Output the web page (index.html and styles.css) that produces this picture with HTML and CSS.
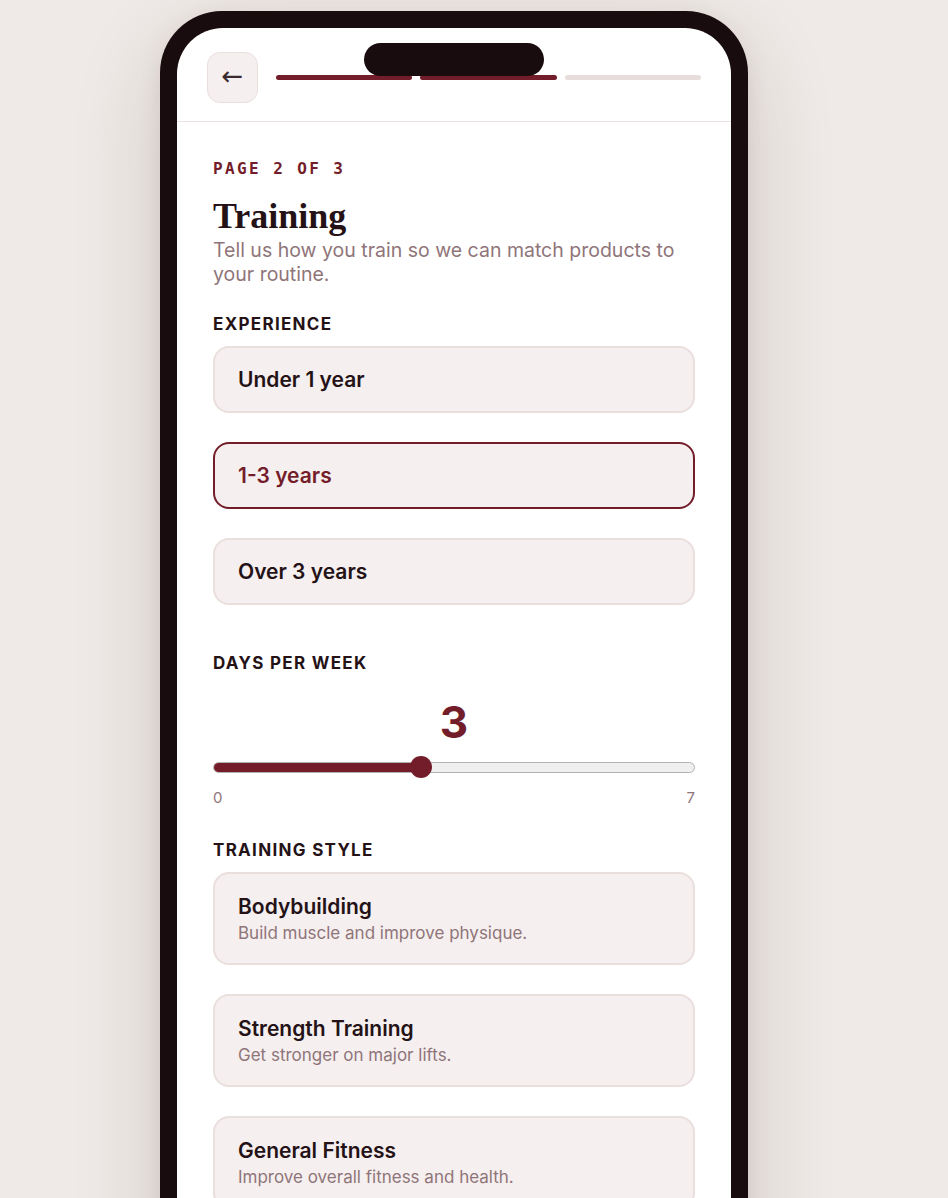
FILE: index.html
```html
<!DOCTYPE html>
<html lang="en">
<head>
<meta charset="utf-8">
<title>Training</title>
<link rel="stylesheet" href="styles.css">
</head>
<body>
<div class="stage">
  <div class="phone">
    <div class="screen">
      <div class="notch"></div>
      <header class="topbar">
        <button class="back" aria-label="Back">←</button>
        <div class="progress">
          <span class="seg done"></span>
          <span class="seg done"></span>
          <span class="seg"></span>
        </div>
      </header>
      <main class="content">
        <div class="eyebrow">PAGE 2 OF 3</div>
        <h1 class="title">Training</h1>
        <p class="lead">Tell us how you train so we can match products to your routine.</p>

        <section class="group">
          <h2 class="label">EXPERIENCE</h2>
          <div class="options">
            <div class="option">Under 1 year</div>
            <div class="option selected">1-3 years</div>
            <div class="option">Over 3 years</div>
          </div>
        </section>

        <section class="group days">
          <h2 class="label">DAYS PER WEEK</h2>
          <div class="value">3</div>
          <div class="slider">
            <div class="track">
              <div class="fill" style="width: 43.5%"></div>
            </div>
            <div class="thumb" style="left: calc((100% - 22px) * 3 / 7)"></div>
          </div>
          <div class="scale"><span>0</span><span>7</span></div>
        </section>

        <section class="group style">
          <h2 class="label">TRAINING STYLE</h2>
          <div class="options">
            <div class="option card">
              <div class="card-title">Bodybuilding</div>
              <div class="card-desc">Build muscle and improve physique.</div>
            </div>
            <div class="option card">
              <div class="card-title">Strength Training</div>
              <div class="card-desc">Get stronger on major lifts.</div>
            </div>
            <div class="option card">
              <div class="card-title">General Fitness</div>
              <div class="card-desc">Improve overall fitness and health.</div>
            </div>
          </div>
        </section>
      </main>
    </div>
  </div>
</div>
</body>
</html>
```

FILE: styles.css
```css
* { box-sizing: border-box; }
html, body { margin: 0; padding: 0; }
body {
  background: #efeae7;
  font-family: Inter, "Noto Sans", sans-serif;
  color: #241216;
  overflow: hidden;
  height: 1198px;
}
.stage {
  display: flex;
  justify-content: center;
  padding: 11px 40px 0 0;
}
.phone {
  width: 588px;
  height: 1400px;
  background: #190c0e;
  border-radius: 62px;
  padding: 17px 17px;
  box-shadow: 0 30px 90px rgba(60, 30, 30, 0.16), 0 6px 24px rgba(60, 30, 30, 0.08);
  flex-shrink: 0;
}
.screen {
  position: relative;
  background: #ffffff;
  border-radius: 46px;
  height: 100%;
  overflow: hidden;
}
.notch {
  position: absolute;
  top: 15px;
  left: 50%;
  transform: translateX(-50%);
  width: 180px;
  height: 33px;
  border-radius: 17px;
  background: #190c0e;
}
.topbar {
  display: flex;
  align-items: center;
  padding: 24px 30px 18px;
  border-bottom: 1px solid #ebe3e2;
}
.back {
  width: 51px;
  height: 51px;
  border-radius: 13px;
  background: #f5efef;
  border: 1px solid #e9dfdd;
  color: #3a2a2e;
  font-family: "DejaVu Sans", sans-serif;
  font-size: 26px;
  line-height: 1;
  padding: 0 0 3px;
  display: flex;
  align-items: center;
  justify-content: center;
  flex-shrink: 0;
}
.progress {
  flex: 1;
  display: flex;
  gap: 8px;
  margin-left: 18px;
}
.seg {
  flex: 1;
  height: 5px;
  border-radius: 3px;
  background: #e7dedc;
}
.seg.done { background: #741d2a; }

.content {
  padding: 37px 36px 40px;
}
.eyebrow {
  font-family: "DejaVu Sans Mono", "Liberation Mono", monospace;
  font-weight: 700;
  font-size: 16px;
  letter-spacing: 2.4px;
  line-height: 20px;
  color: #741d2a;
}
.title {
  margin: 17px 0 0;
  font-family: "Liberation Serif", "DejaVu Serif", serif;
  font-weight: 700;
  font-size: 36px;
  line-height: 40px;
  color: #241216;
}
.lead {
  margin: 2px 0 0;
  font-size: 19.5px;
  line-height: 24px;
  color: #8f7579;
}
.group { margin-top: 28px; }
.label {
  margin: 0 0 12px;
  font-size: 17px;
  font-weight: 700;
  letter-spacing: 1.3px;
  line-height: 20px;
  color: #241216;
}
.options {
  display: flex;
  flex-direction: column;
  gap: 29px;
}
.option {
  background: #f5efef;
  border: 2px solid #e9dfdd;
  border-radius: 16px;
  padding: 0 23px;
  height: 67px;
  display: flex;
  align-items: center;
  font-size: 21px;
  font-weight: 600;
  color: #241216;
}
.option.selected {
  border-color: #741d2a;
  color: #741d2a;
}
.option.card {
  height: 93px;
  flex-direction: column;
  align-items: flex-start;
  justify-content: center;
}
.card-title {
  font-size: 21px;
  font-weight: 600;
  line-height: 26px;
}
.card-desc {
  margin-top: 2px;
  font-size: 17px;
  font-weight: 400;
  line-height: 22px;
  color: #8f7579;
}
.days { margin-top: 48px; }
.value {
  text-align: center;
  font-size: 44px;
  font-weight: 700;
  line-height: 48px;
  color: #741d2a;
  margin-top: 25px;
}
.slider {
  position: relative;
  height: 24px;
  margin-top: 9px;
  display: flex;
  align-items: center;
}
.track {
  width: 100%;
  height: 11px;
  border-radius: 6px;
  background: #efefef;
  border: 1px solid #b3b3b3;
  overflow: hidden;
}
.fill {
  height: 100%;
  background: #741d2a;
}
.thumb {
  position: absolute;
  top: 1px;
  width: 22px;
  height: 22px;
  border-radius: 50%;
  background: #741d2a;
}
.scale {
  display: flex;
  justify-content: space-between;
  margin-top: 10px;
  font-size: 15px;
  line-height: 18px;
  color: #8f7579;
}
.style { margin-top: 33px; }
```
